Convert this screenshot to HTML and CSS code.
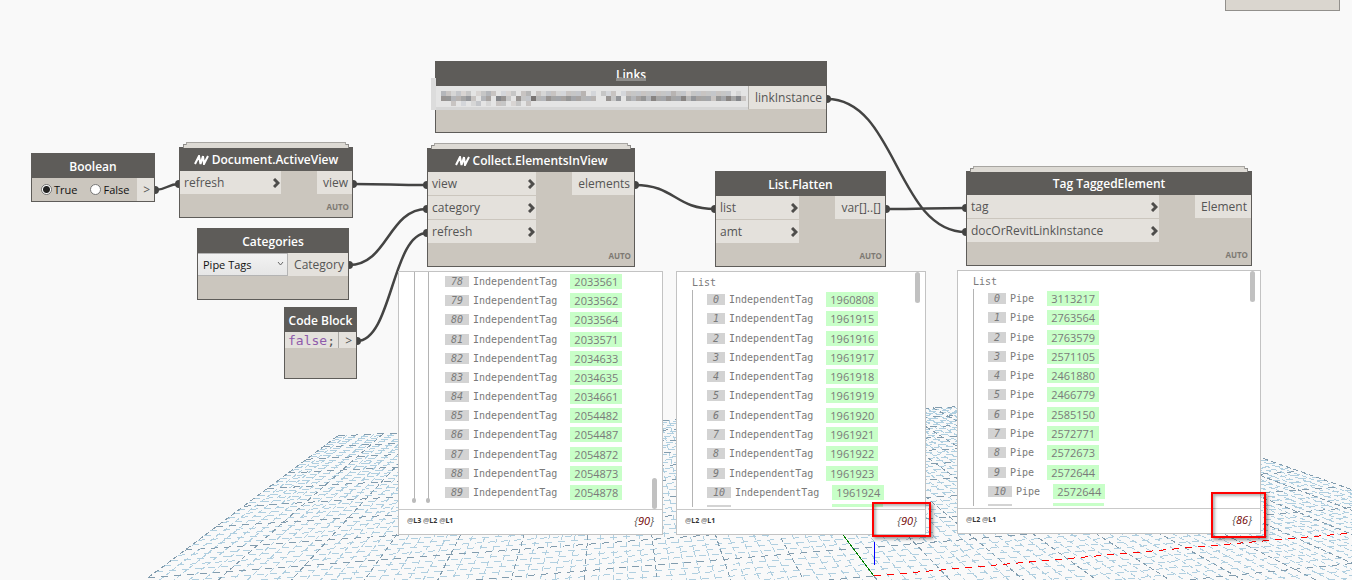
FILE: index.html
```html
<!DOCTYPE html>
<html lang="en">
<head>
  <meta charset="UTF-8">
  <title>Tag TaggedElement</title>
  <link rel="stylesheet" href="styles.css">
</head>
<body>
  <main class="workspace">
    <svg class="layer" id="grid" shape-rendering="crispEdges" aria-hidden="true"></svg>
    <svg class="layer" id="wires" aria-hidden="true"></svg>

    <div class="node-edge"></div>

    <section class="node boolean">
      <h2>Boolean</h2>
      <div class="ports">
        <div class="radios">
          <label><input type="radio" name="bool" checked>True</label>
          <label><input type="radio" name="bool">False</label>
        </div>
        <div class="port out arrow">&gt;</div>
      </div>
    </section>

    <section class="node stacked active-view">
      <h2><svg class="logo" viewBox="0 0 15 10"><path d="M1 9L5 1L6.500 9L9 1M9 1L10 9L14 1"/></svg>Document.ActiveView</h2>
      <div class="ports">
        <div class="inputs"><div class="port">refresh</div></div>
        <div class="port out">view</div>
      </div>
      <div class="lacing">AUTO</div>
    </section>

    <section class="node categories">
      <h2>Categories</h2>
      <div class="ports">
        <div class="dropdown">
          <select aria-label="Category"><option>Pipe Tags</option></select>
          <svg viewBox="0 0 7 5"><path d="M1 1L3.500 4L6 1"/></svg>
        </div>
        <div class="port out">Category</div>
      </div>
    </section>

    <section class="node code-block">
      <h2>Code Block</h2>
      <div class="ports">
        <code><b>false</b>;</code>
        <div class="port out arrow">&gt;</div>
      </div>
    </section>

    <section class="node links">
      <h2>Links</h2>
      <div class="ports">
        <svg class="mosaic" id="mosaic" shape-rendering="crispEdges" aria-hidden="true"></svg>
        <div class="port out">linkInstance</div>
      </div>
    </section>

    <section class="node stacked collect">
      <h2><svg class="logo" viewBox="0 0 15 10"><path d="M1 9L5 1L6.500 9L9 1M9 1L10 9L14 1"/></svg>Collect.ElementsInView</h2>
      <div class="ports">
        <div class="inputs">
          <div class="port">view</div>
          <div class="port">category</div>
          <div class="port">refresh</div>
        </div>
        <div class="port out">elements</div>
      </div>
      <div class="lacing">AUTO</div>
    </section>

    <section class="node flatten">
      <h2>List.Flatten</h2>
      <div class="ports">
        <div class="inputs">
          <div class="port">list</div>
          <div class="port">amt</div>
        </div>
        <div class="port out">var[]..[]</div>
      </div>
      <div class="lacing">AUTO</div>
    </section>

    <section class="node stacked tagged">
      <h2>Tag TaggedElement</h2>
      <div class="ports">
        <div class="inputs">
          <div class="port">tag</div>
          <div class="port">docOrRevitLinkInstance</div>
        </div>
        <div class="port out">Element</div>
      </div>
      <div class="lacing">AUTO</div>
    </section>

    <section class="preview preview-collect">
      <div class="tree nested">
        <ol id="collectList"></ol>
        <span class="thumb bottom"></span>
      </div>
      <footer><span class="levels"><i>@</i>L3 <i>@</i>L2 <i>@</i>L1</span><span class="count">{<b>90</b>}</span></footer>
    </section>

    <section class="preview preview-flatten">
      <div class="tree">
        <h3>List</h3>
        <ol id="flattenList"></ol>
        <span class="thumb"></span>
      </div>
      <footer><span class="levels"><i>@</i>L2 <i>@</i>L1</span><span class="count">{<b>90</b>}</span></footer>
    </section>

    <section class="preview preview-tagged">
      <div class="tree">
        <h3>List</h3>
        <ol id="taggedList"></ol>
        <span class="thumb"></span>
      </div>
      <footer><span class="levels"><i>@</i>L2 <i>@</i>L1</span><span class="count">{<b>86</b>}</span></footer>
    </section>

    <div class="marker marker-flatten"></div>
    <div class="marker marker-tagged"></div>
  </main>
  <script src="script.js"></script>
</body>
</html>
```
FILE: styles.css
```css
* {
  box-sizing: border-box;
}
body {
  margin: 0;
  background: #f9f9f9;
  font-family: "Open Sans", sans-serif;
  font-size: 12px;
  color: #555;
}
.workspace {
  position: relative;
  min-height: 100vh;
  overflow: hidden;
}
.layer {
  position: absolute;
  inset: 0;
  width: 100%;
  height: 100%;
}
#grid line {
  stroke: #b0cfe0;
  stroke-dasharray: 7 6;
}
#grid .major {
  stroke: #829cae;
}
#grid .depth {
  stroke-dasharray: 5 3;
}
#grid .x-axis {
  stroke: #f00;
}
#grid .y-axis {
  stroke: #008000;
  stroke-dasharray: none;
}
#grid .z-axis {
  stroke: #00f;
  stroke-dasharray: none;
}
#wires path {
  fill: none;
  stroke: #444443;
  stroke-width: 2.5;
}
#wires ellipse {
  fill: #444443;
}

/* nodes */
.node {
  position: absolute;
  background: #cbc6be;
  border: 1px solid #5e5c59;
}
.node h2 {
  display: flex;
  align-items: center;
  justify-content: center;
  gap: 3px;
  height: 24px;
  margin: 0;
  padding-top: 2px;
  background: #5e5c59;
  color: #fff;
  font-size: 12px;
  font-weight: 600;
  line-height: 22px;
  white-space: nowrap;
}
.logo {
  width: 15px;
  height: 10px;
  fill: none;
  stroke: #fff;
  stroke-width: 2;
}
.stacked::before,
.stacked::after {
  content: "";
  position: absolute;
  left: 3px;
  right: 3px;
  top: -4px;
  height: 3px;
  background: #dddad4;
  border: 1px solid #8d8b88;
  border-bottom: 0;
}
.stacked::after {
  left: 6px;
  right: 6px;
  top: -6px;
  height: 2px;
  border-color: #a8a6a2;
}
.stacked h2 {
  height: 23px;
  padding-top: 1px;
}
.ports {
  display: flex;
  align-items: flex-start;
  justify-content: space-between;
}
.port {
  display: flex;
  align-items: center;
  justify-content: space-between;
  height: 23px;
  padding: 1px 4px 0 4px;
  background: #e4e1dc;
  font-size: 12px;
  line-height: 22px;
  white-space: nowrap;
}
.port + .port {
  margin-top: 1px;
}
.port svg {
  width: 7px;
  height: 10px;
  margin-right: -3px;
  fill: none;
  stroke: #4e4d4b;
  stroke-width: 3;
}
.port.out {
  padding-left: 6px;
}
.lacing {
  position: absolute;
  right: 3px;
  bottom: 5px;
  color: #7d7973;
  font-size: 8px;
  font-weight: 700;
  line-height: 11px;
}
.node-edge {
  position: absolute;
  left: 1225px;
  top: -10px;
  width: 115px;
  height: 21px;
  background: #dad6cf;
  border: 1px solid #92908c;
}
.boolean { left: 31px; top: 153px; width: 124px; height: 49px; }
.boolean h2 { padding-top: 1px; }
.active-view { left: 179px; top: 147px; width: 174px; height: 71px; }
.active-view .inputs { width: 101px; }
.categories { left: 197px; top: 228px; width: 152px; height: 72px; }
.code-block { left: 284px; top: 307px; width: 73px; height: 72px; }
.links { left: 435px; top: 61px; width: 392px; height: 72px; }
.collect { left: 427px; top: 148px; width: 208px; height: 119px; }
.collect .inputs { width: 108px; }
.flatten { left: 715px; top: 171px; width: 171px; height: 96px; }
.flatten .inputs { width: 83px; }
.tagged { left: 966px; top: 171px; width: 286px; height: 95px; }
.tagged .inputs { width: 192px; }

.radios {
  display: flex;
  gap: 13px;
  padding-left: 9px;
}
.radios label {
  display: flex;
  align-items: center;
  gap: 2px;
  height: 23px;
  color: #111;
  font-size: 11px;
}
.radios input {
  width: 11px;
  height: 11px;
  margin: 0;
  appearance: none;
  background: #fff;
  border: 1px solid #777;
  border-radius: 50%;
}
.radios input:checked {
  background: radial-gradient(#222 0 3px, #fff 4px);
}
.dropdown {
  position: relative;
  flex: 1;
}
.dropdown select {
  display: block;
  width: 100%;
  height: 23px;
  padding: 0 5px;
  appearance: none;
  background: linear-gradient(#f2f2f2, #e6e6e6);
  border: 1px solid #b4b4b4;
  border-left: 0;
  border-radius: 0;
  color: #111;
  font-family: inherit;
  font-size: 11px;
}
.dropdown svg {
  position: absolute;
  right: 4px;
  top: 8px;
  width: 7px;
  height: 5px;
  fill: none;
  stroke: #666;
}
.code-block code {
  flex: 1;
  height: 16px;
  padding-left: 3px;
  background: #e4e1dc;
  font-family: "DejaVu Sans Mono", monospace;
  font-size: 13px;
  line-height: 17px;
}
.code-block code b {
  color: #8f5bab;
  font-weight: 400;
}
.code-block .port {
  height: 16px;
  border-left: 1px solid #aaa8a4;
}
.mosaic {
  flex: 1;
  height: 32px;
  margin: -8px 0 0 -5px;
}
.links .port {
  border-left: 1px solid #b4b2ae;
}

/* watch previews */
.preview {
  position: absolute;
  background: #fff;
  border: 1px solid #c3c3c3;
}
.preview-collect { left: 398px; top: 271px; width: 265px; }
.preview-flatten { left: 676px; top: 271px; width: 250px; }
.preview-tagged { left: 957px; top: 270px; width: 304px; }
.tree {
  position: relative;
  height: 237px;
  color: #7a7a7a;
  font-family: "DejaVu Sans Mono", monospace;
  font-size: 10px;
}
.tree h3 {
  margin: 0;
  padding: 4px 0 0 15px;
  font-size: 10px;
  font-weight: 400;
  line-height: 14px;
}
.tree ol {
  display: grid;
  grid-template-rows: repeat(11, 1fr) 5px;
  height: 217px;
  margin: 0 0 0 15px;
  padding: 0 0 0 14px;
  border-left: 1px solid #b4b4b4;
  list-style: none;
}
.tree.nested ol {
  grid-template-rows: repeat(12, 1fr);
  height: 230px;
  margin-left: 29px;
  padding-left: 16px;
}
.tree.nested::before {
  content: "";
  position: absolute;
  left: 15px;
  top: 0;
  width: 1px;
  height: 230px;
  background: #b4b4b4;
}
.tree.nested::after {
  content: "";
  position: absolute;
  left: 13px;
  top: 226px;
  width: 4px;
  height: 5px;
  border-radius: 2px;
  background: #bbb;
  box-shadow: 14px 0 #bbb;
}
.tree li {
  display: flex;
  align-items: center;
}
.tree li i {
  margin-right: 4px;
  padding: 0 6px;
  background: #d3d3d3;
  line-height: 11px;
}
.tree li b {
  margin-left: 13px;
  padding: 0 4px;
  background: #c8ffc8;
  font-family: "Open Sans", sans-serif;
  font-size: 11px;
  font-weight: 400;
  line-height: 15px;
}
/* top edge of the row below the fold */
.tree li.more {
  align-items: flex-end;
}
.more i {
  width: 24px;
  height: 2px;
}
.more b {
  width: 51px;
  height: 3px;
}
#flattenList .more b {
  margin-left: 97px;
}
#taggedList .more b {
  margin-left: 37px;
}
.thumb {
  position: absolute;
  right: 5px;
  top: 0;
  width: 5px;
  height: 31px;
  border-radius: 3px;
  background: #c1c1c1;
}
.thumb.bottom {
  top: 206px;
}
.preview footer {
  display: flex;
  align-items: center;
  justify-content: space-between;
  height: 25px;
  padding: 0 8px 3px 8px;
  border-top: 1px solid #c9c9c9;
}
.levels {
  color: #333;
  font-size: 7px;
  font-weight: 700;
  word-spacing: normal;
}
.levels i {
  color: #888;
  font-style: normal;
}
.count {
  color: #555;
  font-size: 11px;
  font-style: italic;
}
.count b {
  color: #700000;
  font-weight: 400;
}

/* red callouts */
.marker {
  position: absolute;
  border: 2px solid #f00;
  box-shadow: 2px 2px 3px rgba(0, 0, 0, 0.4), inset 2px 2px 3px rgba(0, 0, 0, 0.3);
}
.marker-flatten { left: 872px; top: 502px; width: 59px; height: 35px; }
.marker-tagged { left: 1211px; top: 492px; width: 55px; height: 46px; }
```
FILE: script.js
```javascript
const NS = 'http://www.w3.org/2000/svg';

function add(parent, tag, attrs) {
  const el = document.createElementNS(NS, tag);
  for (const key in attrs) el.setAttribute(key, attrs[key]);
  parent.appendChild(el);
}

// ground plane: origin and the two vanishing points
const origin = [874, 576];
const vanishS = [613, 230];
const vanishT = [4720, 230];
const p = 0.0857;
const q = 0.01762;
const near = -0.065; // just below the bottom of the view

function project(s, t) {
  const w = 1 + p * s + q * t;
  return [0, 1].map(i => (origin[i] + p * s * vanishS[i] + q * t * vanishT[i]) / w);
}

const grid = document.getElementById('grid');
function gridLine(a, b, cls) {
  const [x1, y1] = project(...a);
  const [x2, y2] = project(...b);
  add(grid, 'line', { x1, y1, x2, y2, class: cls });
}

for (const major of [false, true]) {
  for (let i = -50; i <= 50; i++) {
    if ((i % 5 === 0) !== major) continue;
    const n = i / 5;
    const cls = major ? 'major' : '';
    const s0 = Math.max(-10, (near - q * n) / p);
    gridLine([10, n], [s0, n], cls + ' depth');
    const t0 = Math.max(-10, (near - p * n) / q);
    const t1 = i === 0 ? 0 : 10; // the x axis takes over from the origin
    if (t0 < t1) gridLine([n, t0], [n, t1], cls);
  }
}
gridLine([0, 0], [0, 10], 'x-axis');
gridLine([0, 0], [10, 0], 'y-axis');
add(grid, 'line', { x1: 874, y1: 542, x2: 874, y2: 565, class: 'z-axis' });

// connectors
const wires = document.getElementById('wires');
[
  [155, 190, 179, 184],
  [353, 184, 427, 185],
  [349, 265, 427, 209],
  [357, 341, 427, 233],
  [635, 185, 715, 209],
  [827, 99, 966, 232],
  [886, 209, 966, 208]
].forEach(([x1, y1, x2, y2]) => {
  const mid = (x1 + x2) / 2;
  add(wires, 'path', { d: `M${x1} ${y1}C${mid} ${y1} ${mid} ${y2} ${x2} ${y2}` });
  add(wires, 'ellipse', { cx: x1, cy: y1, rx: 4, ry: 4 });
  add(wires, 'ellipse', { cx: x2, cy: y2, rx: 4, ry: 4 });
});

// chevron on every input port
document.querySelectorAll('.inputs .port').forEach(port => {
  port.insertAdjacentHTML('beforeend', '<svg viewBox="0 0 7 10"><path d="M1 1L5 5L1 9"/></svg>');
});

// pixelated link name, one hex digit of grey per block
const mosaic = document.getElementById('mosaic');
add(mosaic, 'rect', { x: 0, y: 0, width: 5, height: 33, fill: '#dcdcdc' });
add(mosaic, 'rect', { x: 5, y: 8, width: 400, height: 25, fill: '#e4e4e4' });
add(mosaic, 'rect', { x: 5, y: 29, width: 400, height: 4, fill: '#d6d6d6' });
add(mosaic, 'rect', { x: 185, y: 0, width: 30, height: 3, fill: '#8d8c8a' });
[
  'bcdcdcedcbceddcecbecdccddcccbedecdcedcccccccccbccdcccccccceded',
  '99bba9cebae89ce9cc7bb9aaa9aabbbee9c9eaba9b8aa9aa8b9aaac9a8a8cebd',
  'eecededcedeccedcec'
].forEach((row, y) => {
  [...row].slice(0, 61).forEach((tone, x) => {
    if (tone === 'e') return;
    const tint = [tone + '4' + tone + '6' + tone + 'a', tone + '8' + tone + '4' + tone + '2', tone + '6' + tone + '6' + tone + '6'][(x * 7 + y) % 3];
    add(mosaic, 'rect', { x: 10 + x * 5, y: 13 + y * 5, width: 5, height: 5, fill: '#' + tint });
  });
});

// preview lists
function fill(id, first, name, ids) {
  document.getElementById(id).innerHTML = ids
    .map((value, i) => `<li><i>${first + i}</i>${name}<b>${value}</b></li>`)
    .join('');
}
fill('collectList', 78, 'IndependentTag', [2033561, 2033562, 2033564, 2033571, 2034633, 2034635, 2034661, 2054482, 2054487, 2054872, 2054873, 2054878]);
fill('flattenList', 0, 'IndependentTag', [1960808, 1961915, 1961916, 1961917, 1961918, 1961919, 1961920, 1961921, 1961922, 1961923, 1961924]);
fill('taggedList', 0, 'Pipe', [3113217, 2763564, 2763579, 2571105, 2461880, 2466779, 2585150, 2572771, 2572673, 2572644, 2572644]);
for (const id of ['flattenList', 'taggedList']) {
  document.getElementById(id).insertAdjacentHTML('beforeend', '<li class="more"><i></i><b></b></li>');
}
```
